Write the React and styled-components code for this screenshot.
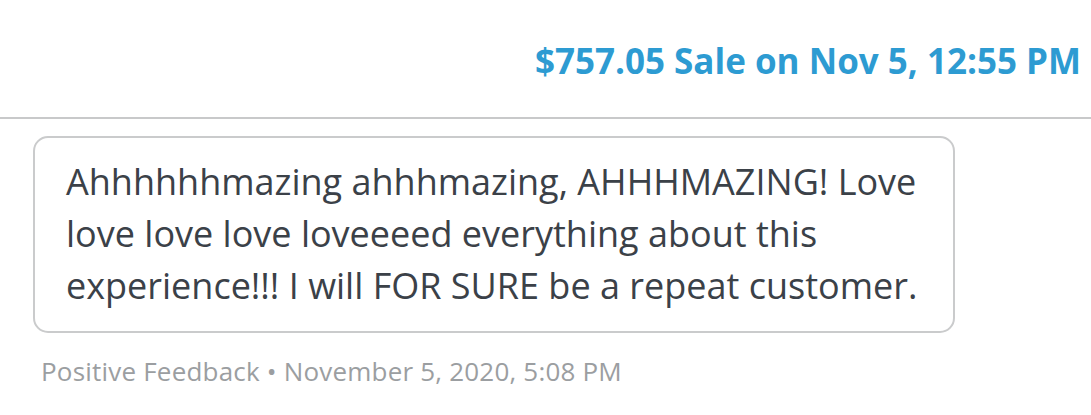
import React from "react";
import styled, { createGlobalStyle } from "styled-components";

const Global = createGlobalStyle`
  html, body { margin: 0; padding: 0; background: #ffffff; }
  body { font-family: "Open Sans", "Liberation Sans", sans-serif; }
`;

const Page = styled.div`
  width: 1091px;
  height: 415px;
  display: flex;
  flex-direction: column;
  overflow: hidden;
`;

const Header = styled.div`
  height: 119px;
  display: flex;
  align-items: center;
  justify-content: flex-end;
  padding-right: 10px;
  border-bottom: 2px solid #c8c9ca;
  box-sizing: border-box;
`;

const SaleLink = styled.a`
  font-family: "Open Sans", sans-serif;
  font-weight: 700;
  font-size: 35px;
  color: #2d9bd2;
  text-decoration: none;
  letter-spacing: 0;
  margin-top: 3px;
`;

const Body = styled.div`
  padding: 17px 0 0 33px;
  display: flex;
  flex-direction: column;
  align-items: flex-start;
`;

const Bubble = styled.div`
  width: 922px;
  box-sizing: border-box;
  border: 2px solid #cacbcc;
  border-radius: 15px;
  padding: 18px 20px 19px 31px;
  font-family: "Open Sans", sans-serif;
  font-size: 36px;
  line-height: 52px;
  color: #3b4148;
`;

const Meta = styled.div`
  margin-top: 20px;
  margin-left: 8px;
  font-family: "Open Sans", sans-serif;
  font-size: 26px;
  letter-spacing: 0.2px;
  color: #9b9ea1;
`;

export default function App() {
  return (
    <Page>
      <Global />
      <Header>
        <SaleLink>$757.05 Sale on Nov 5, 12:55 PM</SaleLink>
      </Header>
      <Body>
        <Bubble>
          Ahhhhhhmazing ahhhmazing, AHHHMAZING! Love
          <br />
          love love love loveeeed everything about this
          <br />
          experience!!! I will FOR SURE be a repeat customer.
        </Bubble>
        <Meta>Positive Feedback • November 5, 2020, 5:08 PM</Meta>
      </Body>
    </Page>
  );
}
